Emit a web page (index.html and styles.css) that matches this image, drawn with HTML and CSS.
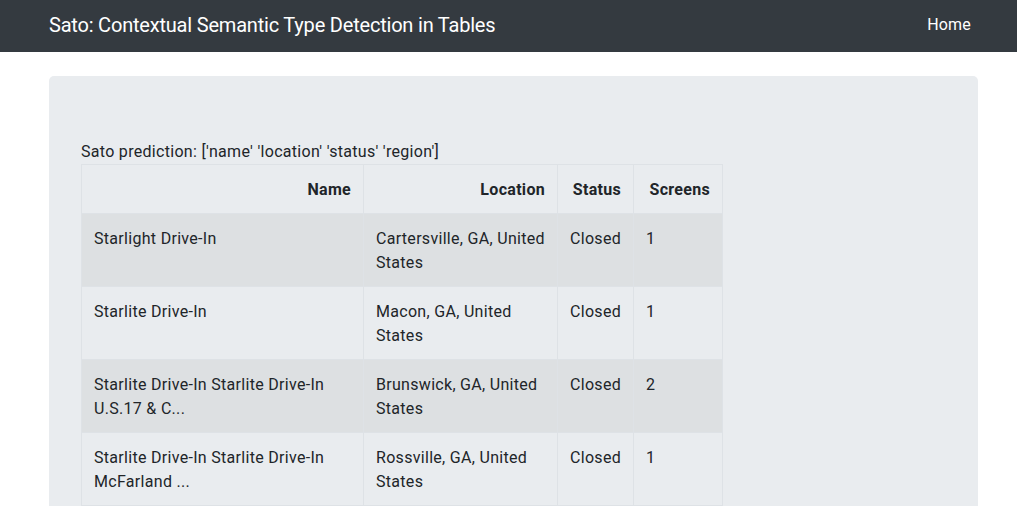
FILE: index.html
```html
<!DOCTYPE html>
<html lang="en">
<head>
<meta charset="utf-8">
<title>Sato</title>
<link rel="stylesheet" href="styles.css">
</head>
<body>
<nav class="navbar">
  <div class="navbar-inner">
    <a class="brand" href="#">Sato: Contextual Semantic Type Detection in Tables</a>
    <a class="nav-link" href="#">Home</a>
  </div>
</nav>
<main class="page">
  <section class="jumbotron">
    <p class="prediction">Sato prediction: ['name' 'location' 'status' 'region']</p>
    <table class="data-table">
      <colgroup>
        <col class="c-name"><col class="c-loc"><col class="c-status"><col class="c-screens">
      </colgroup>
      <thead>
        <tr><th>Name</th><th>Location</th><th>Status</th><th>Screens</th></tr>
      </thead>
      <tbody>
        <tr><td>Starlight Drive-In</td><td>Cartersville, GA, United States</td><td>Closed</td><td>1</td></tr>
        <tr><td>Starlite Drive-In</td><td>Macon, GA, United States</td><td>Closed</td><td>1</td></tr>
        <tr><td>Starlite Drive-In Starlite Drive-In U.S.17 &amp; C...</td><td>Brunswick, GA, United States</td><td>Closed</td><td>2</td></tr>
        <tr><td>Starlite Drive-In Starlite Drive-In McFarland ...</td><td>Rossville, GA, United States</td><td>Closed</td><td>1</td></tr>
      </tbody>
    </table>
  </section>
</main>
</body>
</html>
```
FILE: styles.css
```css
* { box-sizing: border-box; }
html, body { margin: 0; padding: 0; }
body {
  font-family: Roboto, "Liberation Sans", sans-serif;
  font-size: 16px;
  line-height: 24px;
  letter-spacing: 0.3px;
  color: #212529;
  background: #fff;
  overflow: hidden;
}
a { text-decoration: none; }
.navbar {
  background: #343a40;
  height: 52px;
}
.navbar-inner {
  margin-left: 49px;
  width: 922px;
  height: 52px;
  display: flex;
  align-items: center;
  justify-content: space-between;
}
.brand {
  color: #fff;
  font-size: 20px;
  line-height: 30px;
  letter-spacing: -0.2px;
  margin-top: -2px;
}
.nav-link {
  color: #fff;
  font-size: 16px;
  letter-spacing: 0.2px;
  margin-top: -2px;
}
.page {
  padding-top: 24px;
  margin-left: 49px;
  width: 929px;
}
.jumbotron {
  background: #e9ecef;
  border-radius: 5px;
  padding: 63px 32px 32px;
  min-height: 500px;
}
.prediction { margin: 0; padding-top: 1px; }
.data-table {
  border-collapse: collapse;
  table-layout: fixed;
  width: 641px;
}
.c-name { width: 282px; }
.c-loc { width: 194px; }
.c-status { width: 76px; }
.c-screens { width: 89px; }
.data-table th, .data-table td {
  border: 1px solid #dee2e6;
  padding: 13px 12px 11px;
  vertical-align: top;
  text-align: left;
}
.data-table th {
  text-align: right;
  font-weight: 700;
}
.data-table tbody tr:nth-child(odd) { background: rgba(0,0,0,0.05); }
```
